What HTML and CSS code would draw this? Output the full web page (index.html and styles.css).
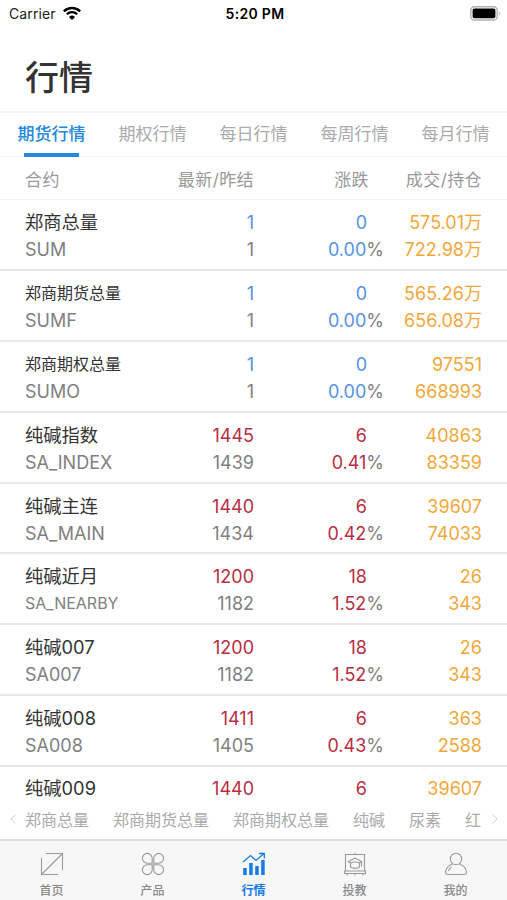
FILE: index.html
```html
<!DOCTYPE html>
<html lang="zh-CN">
  <head>
    <meta charset="utf-8">
    <title>行情</title>
    <link rel="stylesheet" href="styles.css">
  </head>
  <body>
    <div class="status">
      <div class="carrier">
        <span>Carrier</span>
        <svg width="20" height="15" viewBox="0 0 20 15">
          <path d="M1.9 5.4 A11.5 11.5 0 0 1 18.1 5.4" fill="none" stroke="#000" stroke-width="2.5" />
          <path d="M4.8 8.3 A7.4 7.4 0 0 1 15.2 8.3" fill="none" stroke="#000" stroke-width="2.3" />
          <path d="M10 14 L7 11 A4.3 4.3 0 0 1 13 11 Z" />
        </svg>
      </div>
      <div class="time">5:20 PM</div>
      <svg class="battery" width="31" height="15" viewBox="0 0 31 15">
        <rect x="0.8" y="0.8" width="26.4" height="13.2" rx="3.6" fill="#fff" stroke="#b0b0b0" stroke-width="1.4" />
        <rect x="2.6" y="2.6" width="22.8" height="9.6" rx="1.8" />
        <path d="M28.8 5 Q31 7.4 28.8 9.8 Z" fill="#b0b0b0" />
      </svg>
    </div>

    <h1>行情</h1>

    <nav class="tabs">
      <a class="active">期货行情</a>
      <a>期权行情</a>
      <a>每日行情</a>
      <a>每周行情</a>
      <a>每月行情</a>
    </nav>

    <div class="table-head">
      <span>合约</span>
      <span>最新/昨结</span>
      <span>涨跌</span>
      <span>成交/持仓</span>
    </div>

    <main class="list">
      <div class="row">
        <div class="name"><b>郑商总量</b><i>SUM</i></div>
        <div class="price blue"><b>1</b><i>1</i></div>
        <div class="change blue"><b>0</b><i>0.00<em>%</em></i></div>
        <div class="volume"><b>575.01万</b><i>722.98万</i></div>
      </div>
      <div class="row">
        <div class="name long"><b>郑商期货总量</b><i>SUMF</i></div>
        <div class="price blue"><b>1</b><i>1</i></div>
        <div class="change blue"><b>0</b><i>0.00<em>%</em></i></div>
        <div class="volume"><b>565.26万</b><i>656.08万</i></div>
      </div>
      <div class="row">
        <div class="name long"><b>郑商期权总量</b><i>SUMO</i></div>
        <div class="price blue"><b>1</b><i>1</i></div>
        <div class="change blue"><b>0</b><i>0.00<em>%</em></i></div>
        <div class="volume"><b>97551</b><i>668993</i></div>
      </div>
      <div class="row">
        <div class="name"><b>纯碱指数</b><i>SA_INDEX</i></div>
        <div class="price"><b>1445</b><i>1439</i></div>
        <div class="change"><b>6</b><i>0.41<em>%</em></i></div>
        <div class="volume"><b>40863</b><i>83359</i></div>
      </div>
      <div class="row">
        <div class="name"><b>纯碱主连</b><i>SA_MAIN</i></div>
        <div class="price"><b>1440</b><i>1434</i></div>
        <div class="change"><b>6</b><i>0.42<em>%</em></i></div>
        <div class="volume"><b>39607</b><i>74033</i></div>
      </div>
      <div class="row">
        <div class="name"><b>纯碱近月</b><i class="small">SA_NEARBY</i></div>
        <div class="price"><b>1200</b><i>1182</i></div>
        <div class="change"><b>18</b><i>1.52<em>%</em></i></div>
        <div class="volume"><b>26</b><i>343</i></div>
      </div>
      <div class="row">
        <div class="name"><b>纯碱007</b><i>SA007</i></div>
        <div class="price"><b>1200</b><i>1182</i></div>
        <div class="change"><b>18</b><i>1.52<em>%</em></i></div>
        <div class="volume"><b>26</b><i>343</i></div>
      </div>
      <div class="row">
        <div class="name"><b>纯碱008</b><i>SA008</i></div>
        <div class="price"><b>1411</b><i>1405</i></div>
        <div class="change"><b>6</b><i>0.43<em>%</em></i></div>
        <div class="volume"><b>363</b><i>2588</i></div>
      </div>
      <div class="row last">
        <div class="name"><b>纯碱009</b></div>
        <div class="price"><b>1440</b></div>
        <div class="change"><b>6</b></div>
        <div class="volume"><b>39607</b></div>
      </div>
    </main>

    <div class="products">
      <svg width="6" height="10" viewBox="0 0 6 10"><path d="M5.3 .5 L.8 5 L5.3 9.5" /></svg>
      <div class="names">
        <span>郑商总量</span>
        <span>郑商期货总量</span>
        <span>郑商期权总量</span>
        <span>纯碱</span>
        <span>尿素</span>
        <span>红</span>
      </div>
      <svg width="6" height="10" viewBox="0 0 6 10"><path d="M.7 .5 L5.2 5 L.7 9.5" /></svg>
    </div>

    <footer class="bar">
      <a>
        <svg width="24" height="24" viewBox="0 0 24 24">
          <path d="M6 1.5 H22.5 V18 M1.5 6 V22.5 H18 M1.5 22.5 L22.5 1.5" />
        </svg>
        <span>首页</span>
      </a>
      <a>
        <svg width="24" height="24" viewBox="0 0 24 24">
          <path d="M11.2 11.2 H6.2 A4.9 4.9 0 1 1 11.2 6.2 Z M12.8 11.2 V6.2 A4.9 4.9 0 1 1 17.8 11.2 Z M11.2 12.8 V17.8 A4.9 4.9 0 1 1 6.2 12.8 Z M12.8 12.8 H17.8 A4.9 4.9 0 1 1 12.8 17.8 Z" />
        </svg>
        <span>产品</span>
      </a>
      <a class="active">
        <svg width="24" height="24" viewBox="0 0 24 24">
          <path class="fill" d="M1.2 16 H4.7 V23 H1.2 Z M7.2 11 H10.7 V23 H7.2 Z M13.2 14 H16.7 V23 H13.2 Z M19.2 8 H22.7 V23 H19.2 Z" />
          <path d="M1 10 L8.5 3.5 L14 8.5 L22 1.5 M17 1.5 H22.3 V6.5" />
        </svg>
        <span>行情</span>
      </a>
      <a>
        <svg width="24" height="24" viewBox="0 0 24 24">
          <path d="M2.5 19 V2.5 H21.5 V19 M1.5 19 H22.5 V21.5 H1.5 Z M4 21.5 V23.5 M20 21.5 V23.5 M12 .8 V2.5 M12 21.5 V23.5" />
          <path d="M12 6 L18.5 9.5 L16.5 11 Q12 9 7.5 11 L5.5 9.5 Z M7.5 11 V15 Q12 17.8 16.5 15 V11 M18.5 9.5 V14.5" />
        </svg>
        <span>投教</span>
      </a>
      <a>
        <svg width="24" height="24" viewBox="0 0 24 24">
          <circle cx="12" cy="7" r="5.7" />
          <path d="M8.5 12 Q2 14.5 1.5 20 Q1.5 22.5 4 22.5 H20 Q22.7 22.5 22.5 20 Q22 14.5 15.5 12 M4.5 19 Q5 16.5 7.5 15" />
        </svg>
        <span>我的</span>
      </a>
    </footer>
  </body>
</html>
```
FILE: styles.css
```css
* {
  box-sizing: border-box;
}

body {
  display: flex;
  flex-direction: column;
  height: 900px;
  margin: 0;
  overflow: hidden;
  background-color: #fff;
  color: #333;
  font-family: Inter, "Noto Sans CJK SC", sans-serif;
}

.status {
  display: grid;
  grid-template-columns: 1fr auto 1fr;
  align-items: center;
  height: 27px;
  padding: 0 6px 0 9px;
  color: #222;
  font-size: 14px;
}

.carrier {
  display: flex;
  align-items: center;
  gap: 6px;
  letter-spacing: 0.1px;
}

.time {
  color: #000;
  font-weight: 600;
  letter-spacing: 0.3px;
}

.battery {
  justify-self: end;
}

h1 {
  height: 84px;
  margin: 0;
  padding-left: 25px;
  font-size: 34px;
  font-weight: 500;
  line-height: 101px;
}

.tabs {
  display: grid;
  grid-template-columns: repeat(5, 101px);
  height: 46px;
  padding-left: 1px;
  border-top: 2px solid #f4f4f4;
  border-bottom: 1px solid #f5f5f5;
  color: #aaa;
  font-size: 17px;
  line-height: 42px;
  text-align: center;
}

.tabs a {
  white-space: nowrap;
}

.tabs .active {
  color: #2389dc;
  font-weight: 500;
}

.tabs .active::after {
  display: block;
  width: 55px;
  height: 4px;
  margin: -2px auto 0;
  background-color: #2389dc;
  content: "";
}

.table-head,
.row {
  display: grid;
  grid-template-columns: 129px 100px 130px 98px;
  padding-left: 25px;
}

.table-head {
  height: 43px;
  border-bottom: 1px solid #f2f2f2;
  color: #999;
  font-size: 17px;
  letter-spacing: 0.4px;
  line-height: 46px;
  text-align: right;
}

.table-head span:first-child {
  text-align: left;
}

.table-head span:nth-child(3) {
  padding-right: 15px;
}

.list {
  height: 603px;
}

.row {
  height: 70.9px;
  padding-top: 9px;
  border-bottom: 2px solid #e8e8e8;
  font-size: 18px;
  line-height: 27px;
  text-align: right;
}

.row.last {
  height: 35px;
  padding-top: 8px;
  border-bottom: none;
}

.row b,
.row i {
  display: block;
  height: 27px;
  font-style: normal;
  font-weight: 400;
  white-space: nowrap;
}

.row i {
  color: #808080;
}

.row .name {
  text-align: left;
}

.name b {
  font-size: 18.3px;
}

.long b {
  font-size: 16px;
}

.name .small {
  font-size: 16px;
}

.price b,
.change b,
.change i {
  color: #b92d43;
}

.blue b,
.change.blue i {
  color: #5791e3;
}

.change b {
  padding-right: 17px;
}

.change em {
  color: #808080;
  font-style: normal;
}

.volume b,
.volume i {
  color: #f1a73b;
}

.products {
  display: flex;
  align-items: center;
  height: 37px;
  padding: 0 9px 4px 10px;
  color: #aaa;
  font-size: 16px;
}

.products svg {
  fill: none;
  stroke: #ccc;
}

.names {
  display: flex;
  flex: 1;
  gap: 24px;
  padding-left: 9px;
  white-space: nowrap;
}

.bar {
  display: grid;
  grid-template-columns: repeat(5, 101px);
  height: 61px;
  padding: 11px 0 0 1px;
  border-top: 2px solid #dedede;
  background-color: #f7f7f7;
  color: #888;
  font-size: 12px;
  font-weight: 500;
}

.bar a {
  display: flex;
  flex-direction: column;
  align-items: center;
  line-height: 18px;
}

.bar svg {
  margin-bottom: 6px;
  fill: none;
  stroke: #999;
  stroke-width: 1.1;
}

.bar .active {
  color: #147be8;
  font-weight: 700;
}

.bar .active svg {
  stroke: #147be8;
  stroke-width: 1.3;
}

.bar .fill {
  fill: #147be8;
  stroke: none;
}
```
